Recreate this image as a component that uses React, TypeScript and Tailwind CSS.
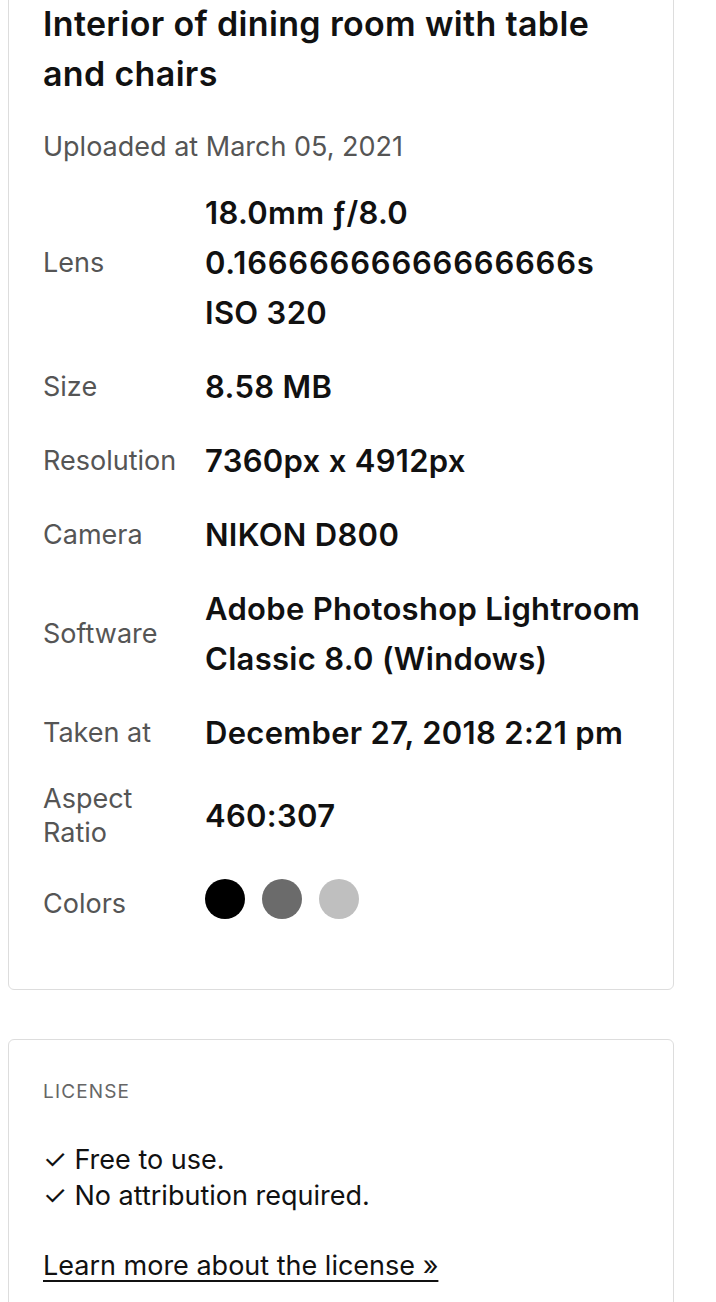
export default function App() {
  const rows: { label: string; value: React.ReactNode }[] = [
    {
      label: "Lens",
      value: (
        <>
          <div>18.0mm ƒ/8.0</div>
          <div className="tracking-[0.025em]">0.16666666666666666s</div>
          <div>ISO 320</div>
        </>
      ),
    },
    { label: "Size", value: "8.58 MB" },
    { label: "Resolution", value: "7360px x 4912px" },
    { label: "Camera", value: "NIKON D800" },
    {
      label: "Software",
      value: (
        <>
          <div>Adobe Photoshop Lightroom</div>
          <div>Classic 8.0 (Windows)</div>
        </>
      ),
    },
    { label: "Taken at", value: "December 27, 2018 2:21 pm" },
    {
      label: "Aspect Ratio",
      value: "460:307",
    },
  ];

  return (
    <div className="min-h-[1302px] overflow-hidden bg-white font-['Inter',sans-serif] text-[#111111]">
      <div className="ml-2 -mt-[40px] w-[666px] rounded-md border border-[#dddddd] pl-[34px] pr-[30px] pt-[38px] pb-[65px]">
        <h1 className="text-[34px] font-semibold leading-[50px] tracking-[0.01em] text-[#111111]">
          Interior of dining room with table and chairs
        </h1>
        <p className="mt-[30px] text-[27px] leading-[36px] text-[#555555]">
          Uploaded at March 05, 2021
        </p>
        <div className="mt-[23px] grid grid-cols-[162px_1fr] items-center gap-y-[24px]">
          {rows.map((r) => (
            <div key={r.label} className="contents">
              <div className="w-[140px] text-[27px] leading-[34px] text-[#555555]">
                {r.label}
              </div>
              <div className="text-[31px] font-semibold leading-[50px] tracking-[0.01em] text-[#111111]">
                {r.value}
              </div>
            </div>
          ))}
          <div className="pt-[10px] text-[27px] leading-[34px] text-[#555555]">Colors</div>
          <div className="flex h-[50px] items-center gap-[17px]">
            <span className="h-[40px] w-[40px] rounded-full bg-[#000000]" />
            <span className="h-[40px] w-[40px] rounded-full bg-[#6b6b6b]" />
            <span className="h-[40px] w-[40px] rounded-full bg-[#bfbfbf]" />
          </div>
        </div>
      </div>

      <div className="ml-2 mt-[49px] w-[666px] rounded-md border border-[#dddddd] px-[34px] pt-[38px] pb-[40px]">
        <div className="text-[19px] uppercase leading-[28px] tracking-[0.06em] text-[#666666]">
          License
        </div>
        <div className="mt-[36px] text-[27px] leading-[36px] text-[#111111]">
          <div>✓ Free to use.</div>
          <div>✓ No attribution required.</div>
        </div>
        <a
          href="#"
          className="mt-[34px] inline-block text-[27px] leading-[36px] text-[#111111] underline underline-offset-[5px]"
        >
          Learn more about the license »
        </a>
      </div>
    </div>
  );
}
